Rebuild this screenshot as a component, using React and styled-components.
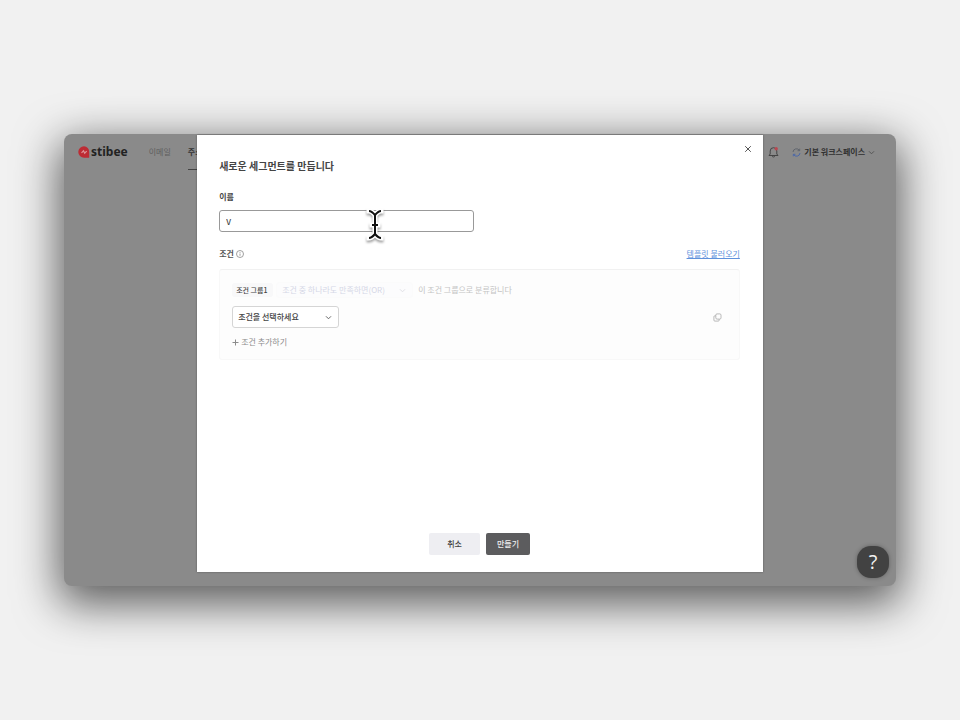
import React from "react";
import styled, { createGlobalStyle } from "styled-components";

const GlobalStyle = createGlobalStyle`
  *, *::before, *::after { box-sizing: border-box; }
  body {
    margin: 0;
    background: #f1f1f1;
    font-family: "Noto Sans CJK KR", "Noto Sans", sans-serif;
    font-size: 8px;
    line-height: 12px;
    color: #444;
  }
  button, input, select { font: inherit; color: inherit; margin: 0; }
  h1, p { margin: 0; }
  svg { display: block; flex: none; }
`;

const Stage = styled.div`
  min-height: 100vh;
  display: flex;
  flex-direction: column;
  justify-content: center;
  padding: 0 64px;
`;

const Window = styled.div`
  position: relative;
  min-height: 452px;
  display: flex;
  flex-direction: column;
  border-radius: 8px;
  background: #8a8a8a;
  box-shadow: 0 13px 44px 5px rgba(0, 0, 0, 0.62);
`;

const TopBar = styled.header`
  height: 36px;
  display: flex;
  align-items: center;
  justify-content: space-between;
  padding: 0 21px 0 14px;
`;

const BarGroup = styled.div`
  align-self: stretch;
  display: flex;
  align-items: center;
  gap: ${(p) => p.$gap}px;
`;

const Brand = styled.a`
  display: flex;
  align-items: center;
  gap: 1px;
  margin-right: 4px;
  color: #222;
  font: 700 12px/16px "Noto Sans", sans-serif;
  text-decoration: none;
`;

const NavLink = styled.a`
  height: 36px;
  display: flex;
  align-items: center;
  color: ${(p) => (p.$active ? "#333" : "#5e5e5e")};
  font-weight: ${(p) => (p.$active ? 700 : 400)};
  text-decoration: none;
  border-top: 1px solid transparent;
  border-bottom: 1px solid ${(p) => (p.$active ? "#444" : "transparent")};
`;

const BellButton = styled.button`
  padding: 0;
  border: 0;
  background: none;
  color: #444;
`;

const Workspace = styled.button`
  display: flex;
  align-items: center;
  gap: 3px;
  padding: 0;
  border: 0;
  background: none;
  color: #303030;
  font-weight: 700;
  white-space: nowrap;
`;

const Overlay = styled.div`
  position: absolute;
  inset: 1px 0 14px;
  display: flex;
  justify-content: center;
`;

const Modal = styled.form`
  position: relative;
  width: 68%;
  display: flex;
  flex-direction: column;
  padding: 23px 23px 17px 22px;
  background: #fff;
  box-shadow: 0 0 2px rgba(0, 0, 0, 0.35);
`;

const CloseButton = styled.button`
  position: absolute;
  top: 10px;
  right: 11px;
  padding: 0;
  border: 0;
  background: none;
  color: #555;
`;

const Title = styled.h1`
  font-size: 10px;
  font-weight: 700;
  line-height: 16px;
  color: #444;
`;

const Label = styled.label`
  margin-top: 17px;
  font-weight: 700;
`;

const NameInput = styled.input`
  width: 49%;
  height: 22px;
  margin-top: 7px;
  padding: 0 6px;
  border: 1px solid #999;
  border-radius: 3px;
  background: #fff;
  outline: 0;
  font-weight: 500;
`;

const SectionHead = styled.div`
  display: flex;
  align-items: center;
  justify-content: space-between;
  margin-top: 16px;
`;

const SectionTitle = styled.div`
  display: flex;
  align-items: center;
  gap: 2px;
  font-weight: 700;
  color: #555;
`;

const TemplateLink = styled.a`
  color: #5f92dc;
  text-decoration: underline;
`;

const Panel = styled.section`
  display: flex;
  flex-direction: column;
  align-items: flex-start;
  margin-top: 9px;
  padding: 12px 12px 11px;
  border: 1px solid #f8f8f8;
  border-top-color: #f1f1f1;
  border-radius: 3px;
  background: #fdfdfd;
`;

const GroupRow = styled.div`
  display: flex;
  align-items: center;
  height: 16px;
  color: #c4c4c4;
`;

const GroupTag = styled.span`
  width: 41px;
  padding: 0 4px;
  border-radius: 3px;
  background: #f8f8f9;
  color: #444;
  font-size: 7px;
  font-weight: 500;
  line-height: 14px;
  white-space: nowrap;
`;

const SelectBox = styled.div`
  width: ${(p) => p.$width}px;
  height: ${(p) => (p.$quiet ? 16 : 22)}px;
  display: grid;
  align-items: center;
  margin: ${(p) => (p.$quiet ? "0 5px 0 3px" : "0")};
  border: 1px solid ${(p) => (p.$quiet ? "#fbfbfb" : "#d5d5d5")};
  border-radius: 3px;
  background: ${(p) => (p.$quiet ? "#fcfcfd" : "#fff")};
  color: ${(p) => (p.$quiet ? "#d5d7e6" : "#444")};
  font-weight: ${(p) => (p.$quiet ? 400 : 500)};

  select, svg { grid-area: 1 / 1; }
  svg { justify-self: end; margin-right: 6px; pointer-events: none; }
`;

const Select = styled.select`
  appearance: none;
  width: 100%;
  padding: 0 5px;
  border: 0;
  background: none;
  outline: 0;
`;

const ConditionRow = styled.div`
  width: 100%;
  display: flex;
  align-items: center;
  justify-content: space-between;
  margin-top: 8px;
  padding-right: 5px;
`;

const PlainButton = styled.button`
  display: flex;
  align-items: center;
  gap: 2px;
  padding: 0;
  border: 0;
  background: none;
  color: #8c8c8c;
`;

const AddButton = styled(PlainButton)`
  margin-top: 8px;
`;

const Footer = styled.footer`
  display: flex;
  justify-content: center;
  gap: 6px;
  margin-top: auto;
`;

const ActionButton = styled.button`
  width: ${(p) => (p.$primary ? 44 : 51)}px;
  height: 22px;
  padding: 0;
  border: 0;
  border-radius: 2px;
  background: ${(p) => (p.$primary ? "#5c5c5e" : "#eeeef2")};
  color: ${(p) => (p.$primary ? "#eee" : "#444")};
  font-weight: 500;
`;

const HelpButton = styled.button`
  position: absolute;
  right: 7px;
  bottom: 8px;
  width: 32px;
  height: 32px;
  padding: 0;
  border: 0;
  border-radius: 14px;
  background: #424242;
  color: #f2f2f2;
  font: 500 20px/32px "Open Sans", sans-serif;
  box-shadow: 0 0 4px rgba(0, 0, 0, 0.3);
`;

const Cursor = styled.svg`
  position: absolute;
  left: 30%;
  top: 72px;
  margin-left: -2px;
  pointer-events: none;
  filter: drop-shadow(0 2px 1px rgba(0, 0, 0, 0.35));
`;

const Chevron = ({ color = "#666" }) => (
  <svg width="7" height="7" viewBox="0 0 7 7" fill="none" stroke={color}>
    <path d="M1 2.3 3.5 4.8 6 2.3" />
  </svg>
);

const Logo = () => (
  <svg width="12" height="12" viewBox="0 0 12 12">
    <path d="M6 .3a5.7 5.7 0 1 0 0 11.4h5.2V6A5.5 5.5 0 0 0 6 .3Z" fill="#bd2c34" />
    <path d="m3.5 6.8 2-2 1.2 2.4 2-2" fill="none" stroke="#dc9297" strokeWidth="1.2" />
  </svg>
);

const Bell = () => (
  <svg width="11" height="12" viewBox="0 0 11 12" fill="none" stroke="currentColor">
    <path d="M1 9.5h9L8.8 8V5a3.3 3.3 0 0 0-6.6 0v3L1 9.5ZM4.2 10.5q1.3 1 2.6 0" />
    <circle cx="8.2" cy="2.8" r="1.7" fill="#b94750" stroke="none" />
  </svg>
);

const Sync = () => (
  <svg width="9" height="9" viewBox="0 0 9 9" fill="none">
    <path d="M1 4A3.5 3.5 0 0 1 7.5 2.5M7.7.7v2H5.6" stroke="#60656e" />
    <path d="M8 5A3.5 3.5 0 0 1 1.5 6.5M1.3 8.3v-2h2.1" stroke="#4c68a8" />
  </svg>
);

const Info = () => (
  <svg width="8" height="8" viewBox="0 0 8 8" fill="none" stroke="#888" strokeWidth=".8">
    <circle cx="4" cy="4" r="3.5" />
    <path d="M4 3.5v2.3M4 2v.8" />
  </svg>
);

const Close = () => (
  <svg width="8" height="8" viewBox="0 0 8 8" stroke="currentColor">
    <path d="m1.2 1.2 5.6 5.6M6.8 1.2 1.2 6.8" />
  </svg>
);

const Copy = () => (
  <svg width="9" height="9" viewBox="0 0 9 9" fill="none" stroke="#aaa" strokeWidth=".8">
    <rect x="2.8" y=".9" width="5.2" height="5.2" rx="1.2" />
    <path d="M2.8 2.8H1.9q-1 0-1 1v3.3q0 1 1 1h3.3q1 0 1-1v-1" />
  </svg>
);

const Plus = () => (
  <svg width="7" height="7" viewBox="0 0 7 7" stroke="currentColor">
    <path d="M3.5.5v6M.5 3.5h6" />
  </svg>
);

const beam = "M4 4q2.5 0 6 4q3.5-4 6-4M10 7v21M4 31q2.5 0 6-4q3.5 4 6 4M7 18h6";

const TextCursor = () => (
  <Cursor width="20" height="35" viewBox="0 0 20 35" fill="none" aria-hidden="true">
    <path d={beam} stroke="#fff" strokeWidth="5" strokeLinecap="square" />
    <path d={beam} stroke="#111" strokeWidth="2" />
  </Cursor>
);

export default function App() {
  return (
    <>
      <GlobalStyle />
      <Stage>
        <Window>
          <TopBar>
            <BarGroup $gap={17}>
              <Brand href="#"><Logo />stibee</Brand>
              <NavLink href="#">이메일</NavLink>
              <NavLink href="#" $active>주소록</NavLink>
            </BarGroup>
            <BarGroup $gap={13}>
              <BellButton type="button" aria-label="알림"><Bell /></BellButton>
              <Workspace type="button"><Sync />기본 워크스페이스<Chevron color="#555" /></Workspace>
            </BarGroup>
          </TopBar>
          <Overlay>
            <Modal role="dialog" aria-labelledby="title">
              <CloseButton type="button" aria-label="닫기"><Close /></CloseButton>
              <Title id="title">새로운 세그먼트를 만듭니다</Title>
              <Label htmlFor="name">이름</Label>
              <NameInput id="name" defaultValue="V" />
              <TextCursor />
              <SectionHead>
                <SectionTitle>조건 <Info /></SectionTitle>
                <TemplateLink href="#">템플릿 불러오기</TemplateLink>
              </SectionHead>
              <Panel>
                <GroupRow>
                  <GroupTag>조건 그룹1</GroupTag>
                  <SelectBox $quiet $width={137}>
                    <Select aria-label="그룹 조건"><option>조건 중 하나라도 만족하면(OR)</option></Select>
                    <Chevron color="#e0e0e6" />
                  </SelectBox>
                  이 조건 그룹으로 분류합니다
                </GroupRow>
                <ConditionRow>
                  <SelectBox $width={107}>
                    <Select aria-label="조건"><option>조건을 선택하세요</option></Select>
                    <Chevron />
                  </SelectBox>
                  <PlainButton type="button" aria-label="복사"><Copy /></PlainButton>
                </ConditionRow>
                <AddButton type="button"><Plus />조건 추가하기</AddButton>
              </Panel>
              <Footer>
                <ActionButton type="button">취소</ActionButton>
                <ActionButton type="submit" $primary>만들기</ActionButton>
              </Footer>
            </Modal>
          </Overlay>
          <HelpButton type="button" aria-label="도움말">?</HelpButton>
        </Window>
      </Stage>
    </>
  );
}
